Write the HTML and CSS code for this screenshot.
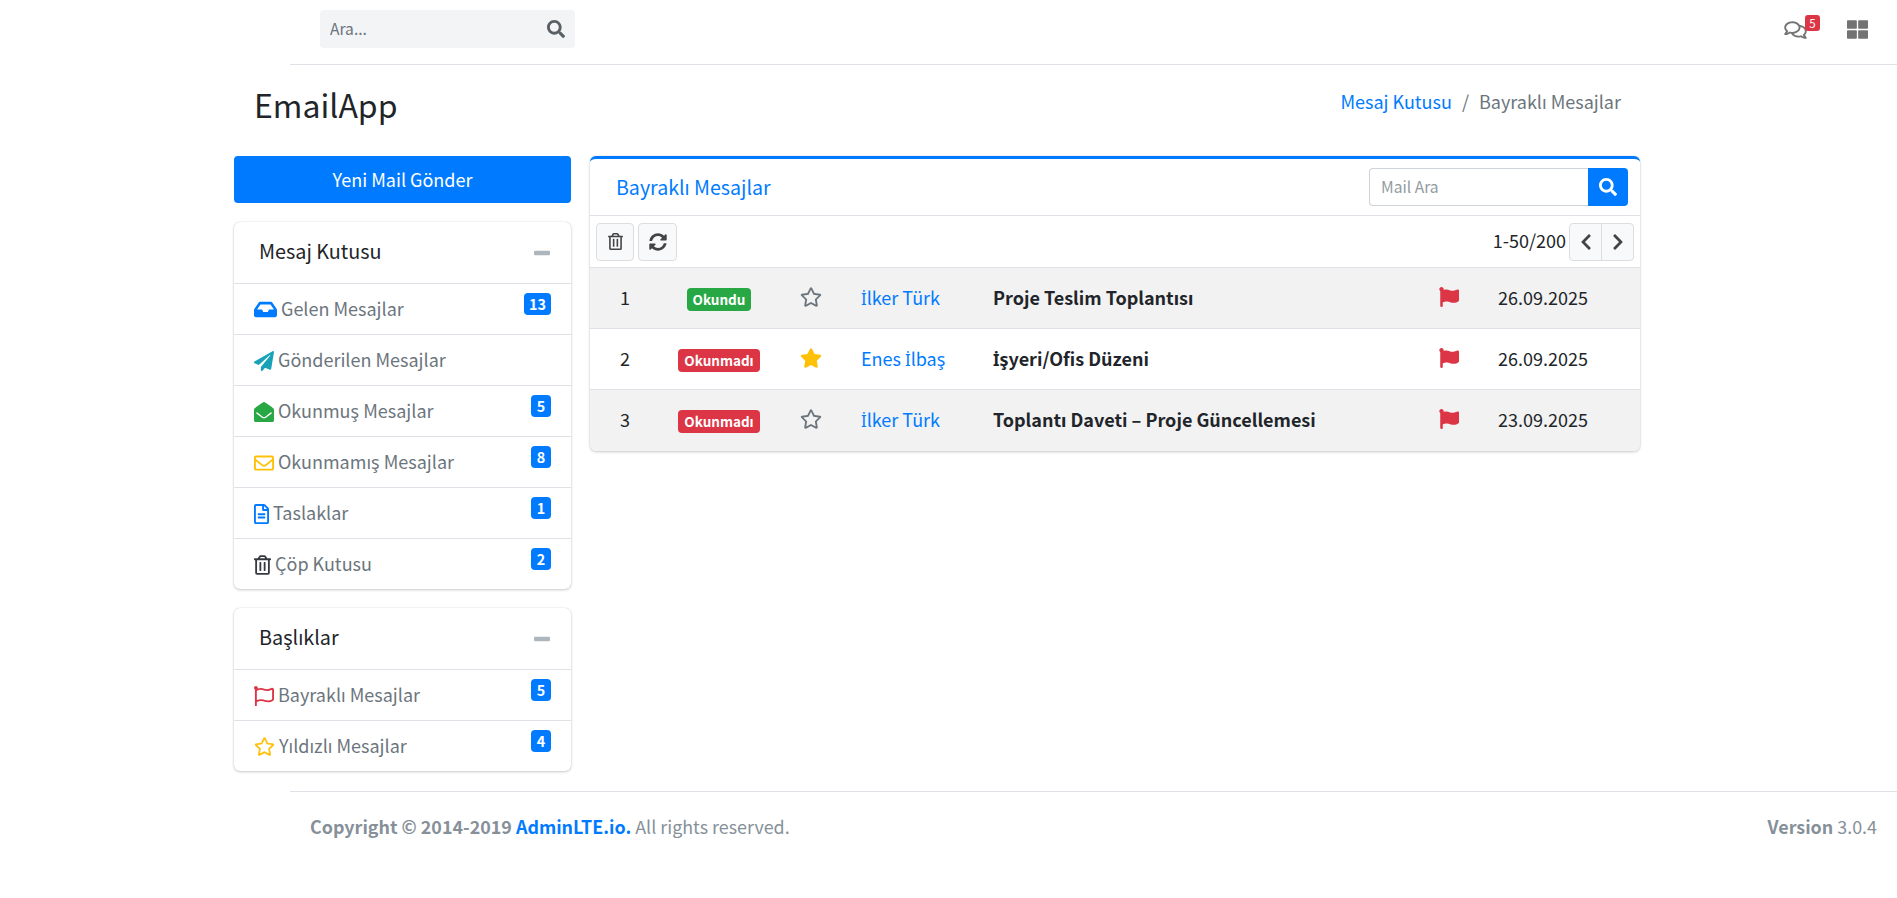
FILE: index.html
```html
<!DOCTYPE html>
<html lang="tr">
<head>
<meta charset="utf-8">
<title>EmailApp</title>
<link rel="stylesheet" href="styles.css">
</head>
<body>
<svg class="sprite" xmlns="http://www.w3.org/2000/svg">
<symbol id="i-search" viewBox="0 0 512 512"><path d="M505 442.7L405.3 343c-4.5-4.5-10.6-7-17-7H372c27.6-35.3 44-79.7 44-128C416 93.1 322.9 0 208 0S0 93.1 0 208s93.1 208 208 208c48.3 0 92.7-16.4 128-44v16.3c0 6.4 2.5 12.5 7 17l99.7 99.7c9.4 9.4 24.6 9.4 33.9 0l28.3-28.3c9.4-9.4 9.4-24.6.1-34zM208 336c-70.7 0-128-57.2-128-128 0-70.7 57.2-128 128-128 70.7 0 128 57.2 128 128 0 70.7-57.2 128-128 128z"/></symbol>
<symbol id="i-inbox" viewBox="0 0 576 512"><path d="M567.938 243.908L462.25 85.374A48.003 48.003 0 0 0 422.311 64H153.689a48 48 0 0 0-39.938 21.374L8.062 243.908A47.994 47.994 0 0 0 0 270.533V400c0 26.51 21.49 48 48 48h480c26.51 0 48-21.49 48-48V270.533a47.994 47.994 0 0 0-8.062-26.625zM162.252 128h251.497l85.333 128H376l-32 64H232l-32-64H76.918l85.334-128z"/></symbol>
<symbol id="i-plane" viewBox="0 0 512 512"><path d="M476 3.2L12.5 270.6c-18.1 10.4-15.8 35.6 2.2 43.2L121 358.4l287.3-253.2c5.5-4.9 13.3 2.6 8.6 8.3L176 407v80.5c0 23.6 28.5 32.9 42.5 15.8L282 426l124.6 52.2c14.2 6 30.4-2.9 33-18.2l72-432C515 7.8 493.3-6.8 476 3.2z"/></symbol>
<symbol id="i-env-open" viewBox="0 0 512 512"><path d="M512 464c0 26.51-21.49 48-48 48H48c-26.51 0-48-21.49-48-48V200.724a48 48 0 0 1 18.387-37.776c24.913-19.529 45.501-35.365 164.2-121.511C199.412 29.17 232.797-.347 256 .003c23.198-.354 56.596 29.172 73.413 41.433 118.687 86.137 139.303 101.995 164.2 121.512A48 48 0 0 1 512 200.724V464zm-65.666-196.605c-2.563-3.728-7.7-4.595-11.339-1.907-22.845 16.873-55.462 40.705-105.582 77.079-16.825 12.266-50.21 41.781-73.413 41.43-23.211.344-56.559-29.143-73.413-41.43-50.114-36.37-82.734-60.204-105.582-77.079-3.639-2.688-8.776-1.821-11.339 1.907l-9.072 13.196a7.998 7.998 0 0 0 1.839 10.967c22.887 16.899 55.454 40.69 105.303 76.868 20.274 14.781 56.524 47.813 92.264 47.573 35.724.242 71.961-32.771 92.263-47.573 49.85-36.179 82.418-59.97 105.303-76.868a7.998 7.998 0 0 0 1.839-10.967l-9.071-13.196z"/></symbol>
<symbol id="i-envelope" viewBox="0 0 512 512"><path d="M464 64H48C21.49 64 0 85.49 0 112v288c0 26.51 21.49 48 48 48h416c26.51 0 48-21.49 48-48V112c0-26.51-21.49-48-48-48zm0 48v40.805c-22.422 18.259-58.168 46.651-134.587 106.49-16.841 13.247-50.201 45.072-73.413 44.701-23.208.375-56.579-31.459-73.413-44.701C106.18 199.465 70.425 171.067 48 152.805V112h416zM48 400V214.398c22.914 18.251 55.409 43.862 104.938 82.646 21.857 17.205 60.134 55.186 103.062 54.955 42.717.231 80.509-37.199 103.053-54.947 49.528-38.783 82.032-64.401 104.947-82.653V400H48z"/></symbol>
<symbol id="i-file" viewBox="0 0 384 512"><path d="M288 248v28c0 6.6-5.4 12-12 12H108c-6.6 0-12-5.4-12-12v-28c0-6.6 5.4-12 12-12h168c6.6 0 12 5.4 12 12zm-12 72H108c-6.6 0-12 5.4-12 12v28c0 6.6 5.4 12 12 12h168c6.6 0 12-5.4 12-12v-28c0-6.6-5.4-12-12-12zm108-188.1V464c0 26.5-21.5 48-48 48H48c-26.5 0-48-21.5-48-48V48C0 21.5 21.5 0 48 0h204.1C264.8 0 277 5.1 286 14.1L369.9 98c9 8.9 14.1 21.2 14.1 33.9zm-128-80V128h76.1L256 51.9zM336 464V176H232c-13.3 0-24-10.7-24-24V48H48v416h288z"/></symbol>
<symbol id="i-trash" viewBox="0 0 448 512"><path d="M268 416h24a12 12 0 0 0 12-12V188a12 12 0 0 0-12-12h-24a12 12 0 0 0-12 12v216a12 12 0 0 0 12 12zM432 80h-82.41l-34-56.7A48 48 0 0 0 274.41 0H173.59a48 48 0 0 0-41.16 23.3L98.41 80H16A16 16 0 0 0 0 96v16a16 16 0 0 0 16 16h16v336a48 48 0 0 0 48 48h288a48 48 0 0 0 48-48V128h16a16 16 0 0 0 16-16V96a16 16 0 0 0-16-16zM171.84 50.91A6 6 0 0 1 177 48h94a6 6 0 0 1 5.15 2.91L293.61 80H154.39zM368 464H80V128h288zm-212-48h24a12 12 0 0 0 12-12V188a12 12 0 0 0-12-12h-24a12 12 0 0 0-12 12v216a12 12 0 0 0 12 12z"/></symbol>
<symbol id="i-flag-o" viewBox="0 0 512 512"><path d="M336.174 80c-49.132 0-93.305-32-161.913-32-31.301 0-58.303 6.482-80.721 15.168a48.04 48.04 0 0 0 2.142-20.727C93.067 19.575 74.167 1.594 51.201.104 23.242-1.71 0 20.431 0 48c0 17.764 9.657 33.262 24 41.562V496c0 8.837 7.163 16 16 16h16c8.837 0 16-7.163 16-16v-83.443C109.869 395.28 143.259 384 199.826 384c49.132 0 93.305 32 161.913 32 58.479 0 101.972-22.617 128.548-39.981C503.846 367.161 512 352.051 512 335.855V95.937c0-34.459-35.264-57.768-66.904-44.117C409.193 67.309 371.641 80 336.174 80zM464 336c-21.783 15.412-60.824 32-102.261 32-59.945 0-102.002-32-161.913-32-43.361 0-96.379 9.403-127.826 24V128c21.784-15.412 60.824-32 102.261-32 59.945 0 102.002 32 161.913 32 43.271 0 96.32-17.366 127.826-32v240z"/></symbol>
<symbol id="i-flag" viewBox="0 0 512 512"><path d="M349.565 98.783C295.978 98.783 251.721 64 184.348 64c-24.955 0-47.309 4.384-68.045 12.013a55.947 55.947 0 0 0 3.586-23.562C118.117 24.015 94.806 1.206 66.338.048 34.345-1.254 8 24.296 8 56c0 19.026 9.497 35.825 24 45.945V488c0 13.255 10.745 24 24 24h16c13.255 0 24-10.745 24-24v-94.4c28.311-12.064 63.582-22.122 114.435-22.122 53.588 0 97.844 34.783 165.217 34.783 48.169 0 86.667-16.294 122.505-40.858C506.84 359.452 512 349.571 512 339.045v-243.1c0-23.393-24.269-38.87-45.485-29.016-34.338 15.948-76.454 31.854-116.95 31.854z"/></symbol>
<symbol id="i-star" viewBox="0 0 576 512"><path d="M259.3 17.8L194 150.2 47.9 171.5c-26.2 3.8-36.7 36.1-17.7 54.6l105.7 103-25 145.5c-4.5 26.3 23.2 46 46.4 33.7L288 439.6l130.7 68.7c23.2 12.2 50.9-7.4 46.4-33.7l-25-145.5 105.7-103c19-18.5 8.5-50.8-17.7-54.6L382 150.2 316.7 17.8c-11.7-23.6-45.6-23.9-57.4 0z"/></symbol>
<symbol id="i-star-o" viewBox="0 0 576 512"><path d="M528.1 171.5L382 150.2 316.7 17.8c-11.7-23.6-45.6-23.9-57.4 0L194 150.2 47.9 171.5c-26.2 3.8-36.7 36.1-17.7 54.6l105.7 103-25 145.5c-4.5 26.3 23.2 46 46.4 33.7L288 439.6l130.7 68.7c23.2 12.2 50.9-7.4 46.4-33.7l-25-145.5 105.7-103c19-18.5 8.5-50.8-17.7-54.6zM388.6 312.3l23.7 138.4L288 385.4l-124.3 65.3 23.7-138.4-100.6-98 139-20.2 62.2-126 62.2 126 139 20.2-100.6 98z"/></symbol>
<symbol id="i-sync" viewBox="0 0 512 512"><path d="M370.72 133.28C339.458 104.008 298.888 87.962 255.848 88c-77.458.068-144.328 53.178-162.791 126.85-1.344 5.363-6.122 9.15-11.651 9.15H24.103c-7.498 0-13.194-6.807-11.807-14.176C33.933 94.924 134.813 8 256 8c66.448 0 126.791 26.136 171.315 68.685L463.03 40.97C478.149 25.851 504 36.559 504 57.941V192c0 13.255-10.745 24-24 24H345.941c-21.382 0-32.09-25.851-16.971-40.971l41.75-41.749zM32 296h134.059c21.382 0 32.09 25.851 16.971 40.971l-41.75 41.75c31.262 29.273 71.835 45.319 114.876 45.28 77.418-.07 144.315-53.144 162.787-126.849 1.344-5.363 6.122-9.15 11.651-9.15h57.304c7.498 0 13.194 6.807 11.807 14.176C478.067 417.076 377.187 504 256 504c-66.448 0-126.791-26.136-171.315-68.685L48.97 471.03C33.851 486.149 8 475.441 8 454.059V320c0-13.255 10.745-24 24-24z"/></symbol>
<symbol id="i-left" viewBox="0 0 320 512"><path d="M34.52 239.03L228.87 44.69c9.37-9.37 24.57-9.37 33.94 0l22.67 22.67c9.36 9.36 9.37 24.52.04 33.9L131.49 256l154.02 154.75c9.34 9.38 9.32 24.54-.04 33.9l-22.67 22.67c-9.37 9.37-24.57 9.37-33.94 0L34.52 272.97c-9.37-9.37-9.37-24.57 0-33.94z"/></symbol>
<symbol id="i-right" viewBox="0 0 320 512"><path d="M285.476 272.971L91.132 467.314c-9.373 9.373-24.569 9.373-33.941 0l-22.667-22.667c-9.357-9.357-9.375-24.522-.04-33.901L188.505 256 34.484 101.255c-9.335-9.379-9.317-24.544.04-33.901l22.667-22.667c9.373-9.373 24.569-9.373 33.941 0L285.475 239.03c9.373 9.372 9.373 24.568.001 33.941z"/></symbol>
<symbol id="i-comments" viewBox="0 0 576 512"><path d="M532 386.2c27.5-27.1 44-61.1 44-98.2 0-80-76.5-146.1-176.2-157.9C368.3 72.5 294.3 32 208 32 93.1 32 0 103.6 0 192c0 37 16.5 71 44 98.2-15.3 30.7-37.3 54.5-37.7 54.9-6.3 6.7-8.1 16.5-4.4 25 3.6 8.5 12 14 21.2 14 53.5 0 96.7-20.2 125.2-38.8 9.2 2.1 18.7 3.7 28.4 4.9C208.1 407.6 281.8 448 368 448c20.8 0 40.8-2.4 59.8-6.8C456.3 459.7 499.4 480 553 480c9.2 0 17.5-5.5 21.2-14 3.6-8.5 1.9-18.3-4.4-25-.4-.3-22.5-24.1-37.8-54.8zm-392.8-92.3L122.1 305c-14.1 9.1-28.5 16.3-43.1 21.4 2.7-4.7 5.4-9.7 8-14.8l15.5-31.1L77.7 256C64.2 242.6 48 220.7 48 192c0-60.7 73.3-112 160-112s160 51.3 160 112-73.3 112-160 112c-16.5 0-33-1.9-49-5.6l-19.8-4.5zM498.3 352l-24.7 24.4 15.5 31.1c2.6 5.1 5.3 10.1 8 14.8-14.6-5.1-29-12.3-43.1-21.4l-17.1-11.1-19.9 4.6c-16 3.7-32.5 5.6-49 5.6-54 0-102.2-20.1-131.3-49.7C338 339.5 416 272.9 416 192c0-3.4-.4-6.7-.7-10C479.7 196.5 528 238.8 528 288c0 28.7-16.2 50.6-29.7 64z"/></symbol>
<symbol id="i-th" viewBox="0 0 512 512"><path d="M296 32h192c13.255 0 24 10.745 24 24v160c0 13.255-10.745 24-24 24H296c-13.255 0-24-10.745-24-24V56c0-13.255 10.745-24 24-24zm-80 0H24C10.745 32 0 42.745 0 56v160c0 13.255 10.745 24 24 24h192c13.255 0 24-10.745 24-24V56c0-13.255-10.745-24-24-24zM0 296v160c0 13.255 10.745 24 24 24h192c13.255 0 24-10.745 24-24V296c0-13.255-10.745-24-24-24H24c-13.255 0-24 10.745-24 24zm296 184h192c13.255 0 24-10.745 24-24V296c0-13.255-10.745-24-24-24H296c-13.255 0-24 10.745-24 24v160c0 13.255 10.745 24 24 24z"/></symbol>
<symbol id="i-minus" viewBox="0 0 448 512" preserveAspectRatio="none"><path d="M416 208H32c-17.67 0-32 14.33-32 32v32c0 17.67 14.33 32 32 32h384c17.67 0 32-14.33 32-32v-32c0-17.67-14.33-32-32-32z"/></symbol>
</svg>

<nav class="navbar">
  <form class="nav-search">
    <input class="nav-search-input" type="text" placeholder="Ara...">
    <svg class="ico nav-search-ico"><use href="#i-search"/></svg>
  </form>
  <div class="nav-right">
    <span class="nav-msg">
      <svg class="ico nav-comments"><use href="#i-comments"/></svg>
      <span class="nav-badge">5</span>
    </span>
    <svg class="ico nav-th"><use href="#i-th"/></svg>
  </div>
</nav>

<main class="wrapper">
  <header class="content-header">
    <h1 class="page-title">EmailApp</h1>
    <ol class="breadcrumb">
      <li><a href="#">Mesaj Kutusu</a></li>
      <li class="sep">/</li>
      <li class="crumb-active">Bayraklı Mesajlar</li>
    </ol>
  </header>

  <div class="columns">
    <aside class="side">
      <a class="compose" href="#">Yeni Mail Gönder</a>

      <section class="card card-first">
        <div class="card-head">
          <h3 class="side-title">Mesaj Kutusu</h3>
          <svg class="ico collapse-ico"><use href="#i-minus"/></svg>
        </div>
        <ul class="side-list">
          <li class="side-item"><svg class="ico si si-inbox c-blue"><use href="#i-inbox"/></svg><span class="side-label">Gelen Mesajlar</span><b class="count">13</b></li>
          <li class="side-item"><svg class="ico si c-teal"><use href="#i-plane"/></svg><span class="side-label">Gönderilen Mesajlar</span></li>
          <li class="side-item"><svg class="ico si c-green"><use href="#i-env-open"/></svg><span class="side-label">Okunmuş Mesajlar</span><b class="count">5</b></li>
          <li class="side-item"><svg class="ico si c-yellow"><use href="#i-envelope"/></svg><span class="side-label">Okunmamış Mesajlar</span><b class="count">8</b></li>
          <li class="side-item"><svg class="ico si si-file c-blue"><use href="#i-file"/></svg><span class="side-label">Taslaklar</span><b class="count">1</b></li>
          <li class="side-item"><svg class="ico si si-trash c-dark"><use href="#i-trash"/></svg><span class="side-label">Çöp Kutusu</span><b class="count">2</b></li>
        </ul>
      </section>

      <section class="card">
        <div class="card-head">
          <h3 class="side-title">Başlıklar</h3>
          <svg class="ico collapse-ico"><use href="#i-minus"/></svg>
        </div>
        <ul class="side-list">
          <li class="side-item"><svg class="ico si c-red"><use href="#i-flag-o"/></svg><span class="side-label">Bayraklı Mesajlar</span><b class="count">5</b></li>
          <li class="side-item"><svg class="ico si si-star c-yellow"><use href="#i-star-o"/></svg><span class="side-label">Yıldızlı Mesajlar</span><b class="count">4</b></li>
        </ul>
      </section>
    </aside>

    <section class="card mail">
      <div class="mail-head">
        <h3 class="mail-title">Bayraklı Mesajlar</h3>
        <div class="mail-search">
          <input class="mail-input" type="text" placeholder="Mail Ara">
          <button class="mail-search-btn" type="button"><svg class="ico"><use href="#i-search"/></svg></button>
        </div>
      </div>
      <div class="toolbar">
        <button class="tbtn" type="button"><svg class="ico tbtn-trash"><use href="#i-trash"/></svg></button>
        <button class="tbtn tbtn-sync" type="button"><svg class="ico"><use href="#i-sync"/></svg></button>
        <span class="pager-text">1-50/200</span>
        <div class="pager">
          <button class="pbtn" type="button"><svg class="ico"><use href="#i-left"/></svg></button>
          <button class="pbtn" type="button"><svg class="ico"><use href="#i-right"/></svg></button>
        </div>
      </div>
      <table class="mail-table">
        <colgroup><col class="c1"><col class="c2"><col class="c3"><col class="c4"><col class="c5"><col class="c6"><col class="c7"></colgroup>
        <tbody>
          <tr>
            <td class="ctr">1</td>
            <td class="ctr"><span class="tag tag-green">Okundu</span></td>
            <td class="ctr"><svg class="ico star c-gray"><use href="#i-star-o"/></svg></td>
            <td><a href="#"><span class="tr-i">İ</span>lker Türk</a></td>
            <td class="subj">Proje Teslim Toplantısı</td>
            <td class="ctr"><svg class="ico flag"><use href="#i-flag"/></svg></td>
            <td>26.09.2025</td>
          </tr>
          <tr>
            <td class="ctr">2</td>
            <td class="ctr"><span class="tag tag-red">Okunmadı</span></td>
            <td class="ctr"><svg class="ico star c-amber"><use href="#i-star"/></svg></td>
            <td><a href="#">Enes <span class="tr-i">İ</span>lbaş</a></td>
            <td class="subj"><span class="tr-i">İ</span>şyeri/Ofis Düzeni</td>
            <td class="ctr"><svg class="ico flag"><use href="#i-flag"/></svg></td>
            <td>26.09.2025</td>
          </tr>
          <tr>
            <td class="ctr">3</td>
            <td class="ctr"><span class="tag tag-red">Okunmadı</span></td>
            <td class="ctr"><svg class="ico star c-gray"><use href="#i-star-o"/></svg></td>
            <td><a href="#"><span class="tr-i">İ</span>lker Türk</a></td>
            <td class="subj">Toplantı Daveti – Proje Güncellemesi</td>
            <td class="ctr"><svg class="ico flag"><use href="#i-flag"/></svg></td>
            <td>23.09.2025</td>
          </tr>
        </tbody>
      </table>
    </section>
  </div>
</main>

<footer class="footer">
  <div class="foot-left"><b>Copyright © 2014-2019 <a href="#">AdminLTE.io.</a></b> All rights reserved.</div>
  <div class="foot-right"><b>Version</b> 3.0.4</div>
</footer>
</body>
</html>
```

FILE: styles.css
```css
* { box-sizing: border-box; }
html, body { margin: 0; padding: 0; }
body {
  background: #fff;
  color: #212529;
  font-family: "Noto Sans CJK SC", "Noto Sans", sans-serif;
  font-size: 18px;
  line-height: 1.5;
  overflow: hidden;
  height: 898px;
}
a { color: #007bff; text-decoration: none; }
h1, h3, ul, ol { margin: 0; padding: 0; list-style: none; font-weight: 400; }
button, input { font: inherit; }
.sprite { display: none; }
.ico { display: block; fill: currentColor; width: 1em; height: 1em; }
.tr-i { font-family: "Noto Sans", sans-serif; font-size: .92em; line-height: 1; }

.c-blue { color: #007bff; }
.c-teal { color: #17a2b8; }
.c-green { color: #28a745; }
.c-yellow { color: #ffc107; }
.c-dark { color: #343a40; }
.c-red { color: #dc3545; }
.c-gray { color: #6c757d; }
.c-amber { color: #ffc107; }

.navbar {
  margin-left: 290px;
  height: 65px;
  border-bottom: 1px solid #dee2e6;
  padding: 10px 29px 0 30px;
  display: flex;
  justify-content: space-between;
}
.nav-search {
  width: 255px;
  height: 38px;
  background: #f2f4f6;
  border-radius: 4px;
  display: flex;
  align-items: center;
  padding: 0 10px;
}
.nav-search-input {
  flex: 1;
  min-width: 0;
  border: 0;
  background: transparent;
  outline: 0;
  padding: 0;
  color: #495057;
  font-size: 15.6px;
}
.nav-search-input::placeholder { color: #6c757d; opacity: 1; }
.nav-search-ico { width: 18px; height: 18px; color: #5a5f63; }
.nav-right { display: flex; align-items: flex-start; gap: 27px; padding-top: 9px; }
.nav-msg { position: relative; display: block; width: 36px; height: 22px; }
.nav-comments { width: 23px; height: 20px; color: rgba(0, 0, 0, .55); margin-top: 1px; }
.nav-badge {
  position: absolute;
  top: -4px;
  left: 21px;
  width: 15px;
  height: 16px;
  border-radius: 3px;
  background: #dc3545;
  color: #fff;
  font-size: 11.5px;
  line-height: 16px;
  text-align: center;
}
.nav-th { width: 21px; height: 21px; color: rgba(0, 0, 0, .55); }

.wrapper { margin-left: 234px; width: 1407px; }
.content-header {
  height: 91px;
  padding: 17px 20px 0;
  display: flex;
  justify-content: space-between;
  align-items: flex-start;
}
.page-title { font-size: 32px; line-height: 1.2; margin-top: 3px; }
.breadcrumb { display: flex; gap: 10px; padding-top: 6px; }
.crumb-active, .sep { color: #6c757d; }

.columns { display: grid; grid-template-columns: 337px 1050px; gap: 19px; align-items: start; }
.side { display: flex; flex-direction: column; }
.compose {
  display: block;
  height: 47px;
  line-height: 47px;
  border-radius: 4px;
  background: #007bff;
  color: #fff;
  text-align: center;
  margin-bottom: 19px;
}
.card {
  background: #fff;
  border-radius: 6px;
  box-shadow: 0 0 1px rgba(0, 0, 0, .2), 0 1px 3px rgba(0, 0, 0, .2);
  margin-bottom: 20px;
}
.card-first { margin-bottom: 19px; }
.card-head {
  height: 62px;
  display: flex;
  align-items: center;
  justify-content: space-between;
  padding: 0 21px 0 25px;
  border-bottom: 1px solid #dee2e6;
}
.side-title { font-size: 19.8px; margin-bottom: 4px; }
.collapse-ico { width: 16px; height: 24px; color: #adb5bd; }
.side-item {
  position: relative;
  height: 51px;
  display: flex;
  align-items: center;
  gap: 4px;
  padding: 1px 0 0 20px;
  color: #6c757d;
  border-bottom: 1px solid #dee2e6;
}
.side-item:last-child { border-bottom: 0; height: 50px; }
.side-label { margin-bottom: 2px; }
.si { width: 20px; height: 20px; }
.si-inbox { width: 23px; height: 23px; }
.si-file { width: 15px; }
.si-trash { width: 17px; }
.si-star { width: 21px; height: 21px; }
.count {
  position: absolute;
  right: 20px;
  top: 9px;
  min-width: 20px;
  height: 22px;
  padding: 0 5px;
  border-radius: 4px;
  background: #007bff;
  color: #fff;
  font-size: 14.4px;
  font-weight: 700;
  line-height: 22px;
  text-align: center;
}

.mail { border-top: 3px solid #007bff; margin-bottom: 0; }
.mail-head {
  height: 57px;
  display: flex;
  align-items: center;
  justify-content: space-between;
  padding: 0 12px 0 26px;
  border-bottom: 1px solid #dee2e6;
}
.mail-title { font-size: 19.6px; color: #007bff; }
.mail-search { display: flex; width: 259px; height: 38px; }
.mail-input {
  flex: 1;
  min-width: 0;
  border: 1px solid #ced4da;
  border-right: 0;
  border-radius: 4px 0 0 4px;
  padding: 0 11px;
  font-size: 15.6px;
  outline: 0;
}
.mail-input::placeholder { color: #939ba2; opacity: 1; }
.mail-search-btn {
  width: 40px;
  border: 0;
  border-radius: 0 4px 4px 0;
  background: #007bff;
  color: #fff;
  padding: 0;
  display: flex;
  align-items: center;
  justify-content: center;
}
.mail-search-btn .ico { width: 18px; height: 18px; }
.toolbar {
  height: 51px;
  display: flex;
  align-items: center;
  padding: 0 6px 0 6px;
}
.tbtn {
  width: 38px;
  height: 38px;
  border: 1px solid #ddd;
  border-radius: 4px;
  background: #f8f9fa;
  color: #444;
  padding: 0;
  display: flex;
  align-items: center;
  justify-content: center;
}
.tbtn .ico { width: 18px; height: 18px; }
.tbtn-trash { width: 15px !important; height: 17px !important; }
.tbtn-sync { width: 39px; margin-left: 4px; }
.pager-text { margin-left: auto; margin-right: 3px; margin-bottom: 2px; }
.pager {
  display: flex;
  width: 65px;
  height: 38px;
  border: 1px solid #ddd;
  border-radius: 4px;
  background: #f8f9fa;
}
.pbtn {
  flex: 1;
  border: 0;
  background: transparent;
  color: #444;
  padding: 0;
  display: flex;
  align-items: center;
  justify-content: center;
}
.pbtn + .pbtn { border-left: 1px solid #ddd; }
.pbtn .ico { width: 12px; height: 18px; }
.mail-table { width: 100%; border-collapse: collapse; table-layout: fixed; }
.c1 { width: 70px; }
.c2 { width: 118px; }
.c3 { width: 65px; }
.c4 { width: 132px; }
.c5 { width: 440px; }
.c6 { width: 68px; }
.mail-table td {
  height: 61px;
  padding: 0 18px 2px;
  border-top: 1px solid #dee2e6;
  vertical-align: middle;
  white-space: nowrap;
}
.mail-table tr:nth-child(odd) td { background: #f2f2f2; }
.mail-table td:last-child { padding-left: 15px; padding-right: 0; }
.mail-table td.ctr { text-align: center; padding: 0 0 2px; }
.mail-table tr:last-child td:first-child { border-bottom-left-radius: 6px; }
.mail-table tr:last-child td:last-child { border-bottom-right-radius: 6px; }
.subj { font-weight: 700; }
.tag {
  display: inline-block;
  vertical-align: middle;
  height: 23px;
  line-height: 23px;
  padding: 0 6px;
  border-radius: 4px;
  color: #fff;
  font-size: 13.5px;
  font-weight: 700;
}
.tag-green { background: #28a745; }
.tag-red { background: #dc3545; }
.star { width: 22px; height: 20px; margin: 0 auto; }
.flag { width: 20px; height: 20px; margin: 0 auto; color: #dc3545; }

.footer {
  margin-left: 290px;
  height: 72px;
  border-top: 1px solid #dee2e6;
  padding: 21px 20px 0;
  display: flex;
  justify-content: space-between;
  color: #869099;
  font-size: 17.9px;
}
```
